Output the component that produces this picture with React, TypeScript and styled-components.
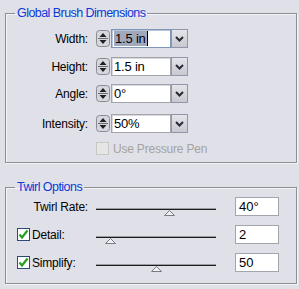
import React from "react";
import styled, { createGlobalStyle } from "styled-components";

const GlobalStyle = createGlobalStyle`
  body {
    margin: 0;
    background: #e0e0e8;
    font-family: "Liberation Sans", Arial, sans-serif;
    font-size: 12px;
    color: #000;
  }
`;

const Panel = styled.div`
  width: 299px;
  height: 289px;
  box-sizing: border-box;
  padding: 6px 2px 0 5px;
  display: flex;
  flex-direction: column;
  gap: 17px;
`;

const Group = styled.fieldset<{ $padTop: number; $padBottom: number; $gap: number }>`
  margin: 0;
  padding: ${(p) => p.$padTop}px 0 ${(p) => p.$padBottom}px 0;
  border: 1px solid #8e8e96;
  box-shadow: inset 1px 1px 0 #f4f4f8, 1px 1px 0 #f4f4f8;
  display: flex;
  flex-direction: column;
  gap: ${(p) => p.$gap}px;
  min-width: 0;
`;

const Legend = styled.legend`
  margin-left: 9px;
  padding: 0 2px;
  color: #0a3ad8;
  font-size: 12.5px;
  line-height: 14px;
  letter-spacing: -0.55px;
`;

const Row = styled.div<{ $mt?: number }>`
  display: flex;
  align-items: center;
  height: 19px;
  margin-top: ${(p) => p.$mt ?? 0}px;
`;

const Label = styled.div<{ $align?: "left" | "right" }>`
  width: 82px;
  flex: none;
  display: flex;
  align-items: center;
  justify-content: ${(p) => (p.$align === "left" ? "flex-start" : "flex-end")};
  padding-left: ${(p) => (p.$align === "left" ? "11px" : "0")};
  box-sizing: border-box;
  letter-spacing: -0.2px;
  white-space: nowrap;
`;

const Combo = styled.div`
  margin-left: 8px;
  display: flex;
  align-items: center;
  height: 19px;
`;

const Spinner = styled.div`
  width: 14px;
  height: 17px;
  flex: none;
  display: flex;
`;

const Field = styled.div<{ $focused?: boolean }>`
  width: 60px;
  height: 19px;
  box-sizing: border-box;
  margin-left: 1px;
  background: #fff;
  border: 1px solid ${(p) => (p.$focused ? "#7f95b8" : "#a4a4ac")};
  box-shadow: inset 1px 1px 0 ${(p) => (p.$focused ? "#b8c6dc" : "#d8d8de")};
  display: flex;
  align-items: center;
  padding-left: 2px;
  font-size: 13px;
  letter-spacing: -0.2px;
`;

const Selected = styled.span`
  background: #a2a8bc;
  padding: 0 1px;
  border-right: 1px solid #000;
  line-height: 15px;
`;

const DropButton = styled.div`
  width: 17px;
  height: 19px;
  box-sizing: border-box;
  border: 1px solid #8e96a8;
  background: linear-gradient(#e4e4ea, #c8c8d2);
  display: flex;
  align-items: center;
  justify-content: center;
`;

const CheckBox = styled.div<{ $disabled?: boolean }>`
  width: 13px;
  height: 13px;
  flex: none;
  box-sizing: border-box;
  border: 1px solid ${(p) => (p.$disabled ? "#c8c8c2" : "#2c4a78")};
  background: ${(p) => (p.$disabled ? "#e6e6e8" : "#fff")};
  display: flex;
  align-items: center;
  justify-content: center;
  margin-right: 2px;
`;

const DisabledText = styled.span`
  color: #a4a49c;
  letter-spacing: -0.2px;
  margin-left: 2px;
`;

const PenRow = styled.div`
  display: flex;
  align-items: center;
  height: 13px;
  margin-top: 9px;
  padding-left: 90px;
`;

const Slider = styled.div`
  position: relative;
  margin-left: 8px;
  width: 120px;
  height: 19px;
  flex: none;
`;

const Track = styled.div`
  position: absolute;
  left: 0;
  right: 0;
  top: 11px;
  height: 2px;
  background: #1c1c1c;
  border-top: 1px solid #9c9ca4;
  box-sizing: border-box;
`;

const Thumb = styled.svg`
  position: absolute;
  top: 13px;
  margin-left: -5px;
`;

const ValueBox = styled.div`
  margin-left: 19px;
  width: 44px;
  height: 19px;
  box-sizing: border-box;
  background: #fff;
  border: 1px solid #a4a4ac;
  display: flex;
  align-items: center;
  padding-left: 3px;
  font-size: 13px;
`;

const SpinIcon = () => (
  <svg width="14" height="17" viewBox="0 0 14 17">
    <rect x="0.5" y="0.5" width="13" height="16" rx="3" fill="#d6d6de" stroke="#8a8a94" />
    <line x1="2" y1="8.5" x2="12" y2="8.5" stroke="#6a6a74" />
    <path d="M3.5 7 L7 3 L10.5 7 Z" fill="#202020" />
    <path d="M3.5 10 L7 14 L10.5 10 Z" fill="#202020" />
  </svg>
);

const Chevron = () => (
  <svg width="9" height="6" viewBox="0 0 9 6">
    <path d="M1 1 L4.5 4.5 L8 1" fill="none" stroke="#2a2a34" strokeWidth="2" />
  </svg>
);

const Check = () => (
  <svg width="11" height="11" viewBox="0 0 11 11">
    <path d="M1.5 5.5 L4 8.5 L9.5 1.5" fill="none" stroke="#22a022" strokeWidth="2.2" />
  </svg>
);

type ComboProps = { value: string; focused?: boolean };

const ComboField: React.FC<ComboProps> = ({ value, focused }) => (
  <Combo>
    <Spinner>
      <SpinIcon />
    </Spinner>
    <Field $focused={focused}>{focused ? <Selected>{value}</Selected> : value}</Field>
    <DropButton>
      <Chevron />
    </DropButton>
  </Combo>
);

type SliderRowProps = { label: string; checked?: boolean; pos: number; value: string };

const SliderRow: React.FC<SliderRowProps> = ({ label, checked, pos, value }) => (
  <Row>
    {checked ? (
      <Label $align="left">
        <CheckBox>
          <Check />
        </CheckBox>
        {label}
      </Label>
    ) : (
      <Label>{label}</Label>
    )}
    <Slider>
      <Track />
      <Thumb width="11" height="6" viewBox="0 0 11 6" style={{ left: `${pos * 100}%` }}>
        <path d="M0.5 5.5 L5.5 0.5 L10.5 5.5 Z" fill="#f0f0f4" stroke="#7a7a84" />
      </Thumb>
    </Slider>
    <ValueBox>{value}</ValueBox>
  </Row>
);

const brushRows = [
  { label: "Width:", value: "1.5 in", focused: true, mt: 0 },
  { label: "Height:", value: "1.5 in", mt: 9 },
  { label: "Angle:", value: "0°", mt: 8 },
  { label: "Intensity:", value: "50%", mt: 11 },
];

const twirlRows = [
  { label: "Twirl Rate:", pos: 0.61, value: "40°" },
  { label: "Detail:", checked: true, pos: 0.12, value: "2" },
  { label: "Simplify:", checked: true, pos: 0.5, value: "50" },
];

export default function App() {
  return (
    <>
      <GlobalStyle />
      <Panel>
        <Group $padTop={9} $padBottom={7} $gap={0}>
          <Legend>Global Brush Dimensions</Legend>
          {brushRows.map((r) => (
            <Row key={r.label} $mt={r.mt}>
              <Label>{r.label}</Label>
              <ComboField value={r.value} focused={r.focused} />
            </Row>
          ))}
          <PenRow>
            <CheckBox $disabled />
            <DisabledText>Use Pressure Pen</DisabledText>
          </PenRow>
        </Group>
        <Group $padTop={3} $padBottom={11} $gap={9}>
          <Legend>Twirl Options</Legend>
          {twirlRows.map((r) => (
            <SliderRow key={r.label} {...r} />
          ))}
        </Group>
      </Panel>
    </>
  );
}
